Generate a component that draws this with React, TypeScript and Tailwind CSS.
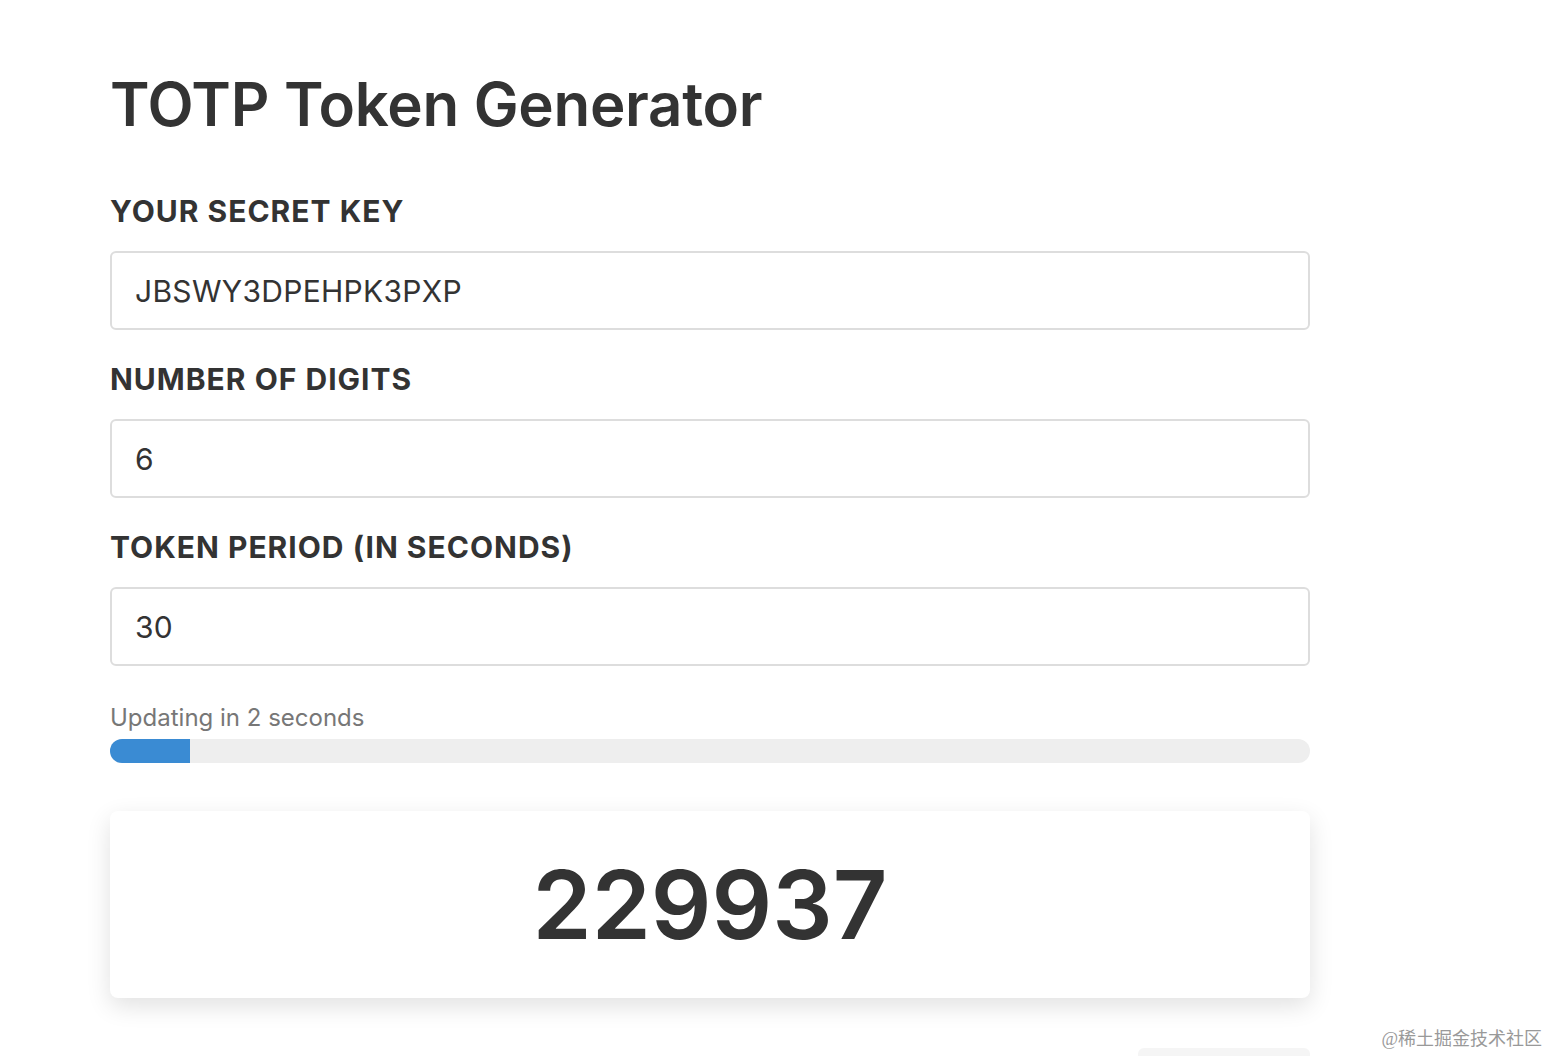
import React from "react";

const font = { fontFamily: "Inter, 'Noto Sans', sans-serif" };

function Field({ label, value }: { label: string; value: string }) {
  return (
    <div className="flex flex-col">
      <label className="h-[28px] flex items-center text-[30px] font-bold uppercase text-[#333] tracking-[1px] mb-[26px] whitespace-nowrap">
        {label}
      </label>
      <input
        readOnly
        value={value}
        className="h-[79px] w-full rounded-[6px] border-2 border-[#dddddd] bg-white px-[23px] text-[30px] tracking-[0.3px] text-[#333] outline-none"
      />
    </div>
  );
}

export default function App() {
  return (
    <div className="relative h-[1056px] w-[1548px] overflow-hidden bg-white text-[#333]" style={font}>
      <div className="ml-[110px] w-[1200px] pt-[68px]">
        <h1 className="text-[60px] font-semibold leading-[72px] tracking-[-0.3px] text-[#333]">TOTP Token Generator</h1>
        <div className="mt-[57px] flex flex-col gap-[35px]">
          <Field label="Your Secret Key" value="JBSWY3DPEHPK3PXP" />
          <Field label="Number of Digits" value="6" />
          <Field label="Token Period (in seconds)" value="30" />
        </div>
        <div className="mt-[38px] text-[24px] leading-[28px] text-[#777]">Updating in 2 seconds</div>
        <div className="mt-[7px] h-[24px] w-full overflow-hidden rounded-full bg-[#eeeeee]">
          <div className="h-full bg-[#3a8bd3]" style={{ width: "80px" }} />
        </div>
        <div className="mt-[48px] flex h-[187px] items-center justify-center rounded-[8px] bg-white shadow-[0_8px_24px_rgba(0,0,0,0.12)]">
          <span className="text-[95px] font-semibold leading-none text-[#333]">229937</span>
        </div>
        <div className="mt-[50px] ml-auto h-[20px] w-[172px] rounded-[6px] bg-[#f5f5f5]" />
      </div>
      <div
        className="absolute bottom-[6px] right-[6px] text-[18px] leading-[22px] text-[#999]"
        style={{ fontFamily: "'Liberation Serif', 'Noto Sans CJK SC', serif" }}
      >
        @稀土掘金技术社区
      </div>
    </div>
  );
}
